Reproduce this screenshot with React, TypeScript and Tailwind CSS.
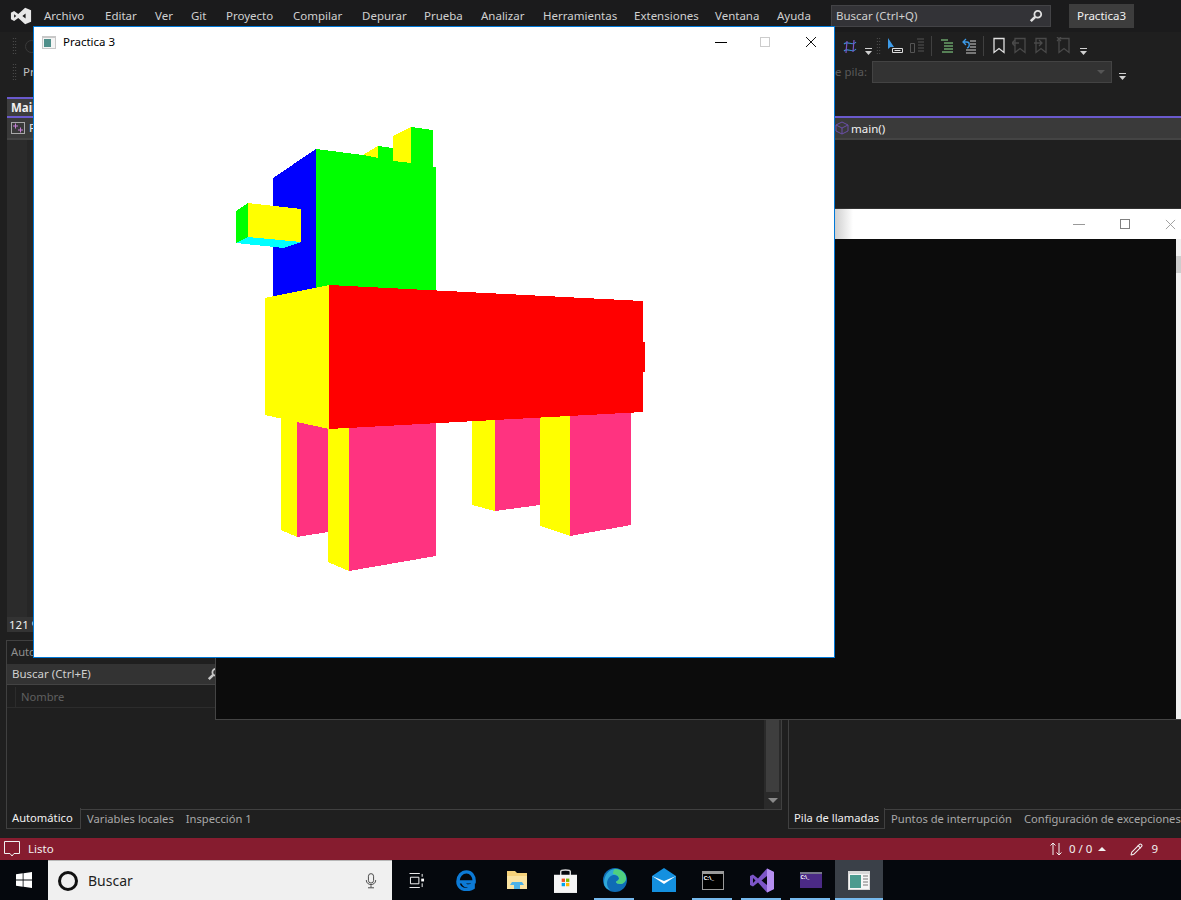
import { ReactNode } from "react";
import { Pencil } from "lucide-react";

const menuItems = [
  { label: "Archivo", w: "w-[61px]" },
  { label: "Editar", w: "w-[50px]" },
  { label: "Ver", w: "w-[36px]" },
  { label: "Git", w: "w-[35px]" },
  { label: "Proyecto", w: "w-[67px]" },
  { label: "Compilar", w: "w-[69px]" },
  { label: "Depurar", w: "w-[62px]" },
  { label: "Prueba", w: "w-[57px]" },
  { label: "Analizar", w: "w-[62px]" },
  { label: "Herramientas", w: "w-[91px]" },
  { label: "Extensiones", w: "w-[81px]" },
  { label: "Ventana", w: "w-[62px]" },
  { label: "Ayuda", w: "w-[54px]" },
];

const Search = ({ className = "" }: { className?: string }) => (
  <svg viewBox="0 0 14 14" className={`w-[14px] h-[14px] ${className}`} fill="none" stroke="currentColor">
    <circle cx="8.8" cy="5.2" r="3.4" strokeWidth="1.8" />
    <path d="M6.2 7.8 1.8 12.2" strokeWidth="2.6" />
  </svg>
);

const VsLogo = ({ className = "", fill = "#e8e8e8" }: { className?: string; fill?: string }) => (
  <svg viewBox="0 0 24 24" preserveAspectRatio="none" className={className}>
    <path fillRule="evenodd" fill={fill} d="M16.500 2 23 5v14l-6.500 3L9 14.500 4.500 18 1 16V8l3.500-2L9 9.500ZM17 9 13.500 12l3.500 3ZM4.500 10v4L6.800 12Z" />
  </svg>
);

const Dropdown = ({ className = "" }: { className?: string }) => (
  <svg viewBox="0 0 7 7" className={`w-[7px] h-[7px] ${className}`}>
    <path d="M0 0h7v1H0zM0 3h7L3.500 7z" fill="#d0d0d0" />
  </svg>
);

const Grip = ({ className = "" }: { className?: string }) => (
  <div className={`w-[5px] h-[18px] bg-[radial-gradient(#5a5a5a_0.7px,transparent_0.8px)] bg-[length:2.500px_3px] ${className}`} />
);

const Bookmark = ({ color, children }: { color: string; children?: ReactNode }) => (
  <svg viewBox="0 0 16 18" className="w-[16px] h-[18px]" fill="none" stroke={color} strokeWidth="1.300">
    <path d="M3 1.500h10v14l-5-4-5 4z" />
    {children}
  </svg>
);

const TabLabel = ({ active, width = "", children }: { active?: boolean; width?: string; children: ReactNode }) => (
  <div className={active ? `h-[21px] shrink-0 pl-[5px] ${width} border border-t-0 border-[#404040] -mt-px bg-[#1f1f1f] text-[#f1f1f1] flex items-center` : "h-[21px] shrink-0 px-[6px] text-[#a8a8a8] flex items-center"}>
    {children}
  </div>
);

const Llama = () => (
  <svg viewBox="34 57 800 600" className="w-[800px] h-[600px] block" shapeRendering="crispEdges">
    <polygon fill="#0000ff" points="273,178 316,149 316,290 273,298" />
    <polygon fill="#ffff00" points="363,155 378,146 378,160" />
    <polygon fill="#00ff00" points="316,149 363,155 378,158 378,146 393,148 393,161 411,163 411,127 433,130 433,167 436,167 436,292 316,292" />
    <polygon fill="#ffff00" points="393,136 411,127 411,163 393,161" />
    <polygon fill="#00ff00" points="236,211 248,203 248,237 236,243" />
    <polygon fill="#ffff00" points="248,203 301,209 301,242 248,237" />
    <polygon fill="#00ffff" points="236,243 248,237 301,242 284,248" />
    <polygon fill="#ffff00" points="281,415 297,415 297,537 281,530" />
    <polygon fill="#ff3380" points="297,415 328,420 328,532 297,537" />
    <polygon fill="#ffff00" points="328,420 349,420 349,571 328,562" />
    <polygon fill="#ff3380" points="349,420 436,420 436,556 349,571" />
    <polygon fill="#ffff00" points="472,410 495,410 495,511 472,505" />
    <polygon fill="#ff3380" points="495,410 540,410 540,505 495,511" />
    <polygon fill="#ffff00" points="540,410 570,410 570,536 540,526" />
    <polygon fill="#ff3380" points="570,410 631,410 631,525 570,536" />
    <polygon fill="#ffff00" points="265,298 329,285 329,429 265,415" />
    <polygon fill="#ff0000" points="329,285 643,301 643,342 645,342 645,372 643,372 643,412 329,429" />
  </svg>
);

const GlWindow = () => (
  <div className="absolute left-[33px] top-[26px] w-[802px] h-[632px] bg-white border border-[#0078d7] text-black">
    <div className="h-[30px] flex items-center relative">
      <svg viewBox="0 0 14 13" className="w-[14px] h-[13px] ml-[8px]">
        <rect width="14" height="13" fill="#c8c8c8" />
        <rect x="1" y="2" width="12" height="10" fill="#f4f4f4" />
        <rect x="2" y="3" width="7" height="8" fill="#4f8f8a" />
      </svg>
      <span className="ml-[7px] text-[11.500px]">Practica 3</span>
      <div className="ml-auto flex items-center h-full">
        <div className="w-[12px] h-px bg-black mr-[33px]" />
        <div className="w-[10px] h-[10px] border border-[#cccccc] mr-[35px]" />
        <svg viewBox="0 0 12 12" className="w-[12px] h-[12px] mr-[17px]" stroke="#111" fill="none">
          <path d="M1 1l10 10M11 1 1 11" />
        </svg>
      </div>
    </div>
    <Llama />
  </div>
);

const ConsoleWindow = () => (
  <div className="absolute left-[215px] top-[208px] w-[966px] h-[512px] border-l border-b border-[#444444] bg-[#0c0c0c]">
    <div className="h-[31px] bg-white flex items-center justify-end border-t border-[#333333] relative">
      <div className="absolute left-[619px] top-0 bottom-0 w-[18px] bg-linear-to-r from-[#cfcfcf] to-white" />
      <div className="w-[12px] h-px bg-[#999999] mr-[35px]" />
      <div className="w-[10px] h-[10px] border border-[#808080] mr-[35px]" />
      <svg viewBox="0 0 12 12" className="w-[11px] h-[11px] mr-[5px]" stroke="#999" fill="none">
        <path d="M1 1l10 10M11 1 1 11" />
      </svg>
    </div>
    <div className="absolute right-0 top-[31px] bottom-0 w-[5px] bg-[#f0f0f0]">
      <div className="w-full h-[17px] mt-[17px] bg-[#cdcdcd]" />
    </div>
  </div>
);

const TaskbarIcons = () => (
  <div className="flex items-center h-full">
    <div className="w-[48px] h-full flex items-center justify-center">
      <svg viewBox="0 0 16 16" className="w-[16px] h-[16px]" fill="#fff">
        <path d="M0 2.300 6.700 1.300V7.600H0ZM7.500 1.200 16 0V7.600H7.500ZM0 8.400H6.700V14.700L0 13.700ZM7.500 8.400H16V16L7.500 14.800Z" />
      </svg>
    </div>
    <div className="w-[344px] h-full bg-[#f0f0f0] border-t border-[#b8b8b8] flex items-center text-[#1e1e1e]">
      <div className="w-[20px] h-[20px] ml-[10px] rounded-full border-[3px] border-[#111111]" />
      <span className="ml-[10px] text-[14px]">Buscar</span>
      <svg viewBox="0 0 14 18" className="w-[12px] h-[17px] ml-auto mr-[15px]" fill="none" stroke="#333">
        <rect x="4" y="1" width="6" height="11" rx="3" />
        <path d="M1.500 8.500c0 7 11 7 11 0M7 14.500v2.500M3.500 17.500h7" />
      </svg>
    </div>
    <div className="w-[49px] h-full flex items-center justify-center">
      <svg viewBox="0 0 16 16" className="w-[16px] h-[15px]" fill="none" stroke="#fff">
        <path d="M0 .5h11M0 15.500h11M1 4.500h9v7H1z" />
        <path d="M13.500 1v3M13.500 11v4" />
        <rect x="12.500" y="6" width="3" height="3" fill="#fff" stroke="none" />
      </svg>
    </div>
    <div className="w-[51px] h-full flex items-center justify-center">
      <svg viewBox="0 0 22 22" className="w-[21px] h-[21px]" fill="none">
        <path d="M3 12.500H19C19.500 6 15.500 2 11 2 6 2 2 6.500 2 12c0 5.500 4 8.500 9 8.500 2.500 0 5-.5 7-2v-3.500c-3.500 2.500-10 3-11-3" stroke="#0c7ad6" strokeWidth="3.500" />
      </svg>
    </div>
    <div className="w-[49px] h-full flex items-center justify-center">
      <svg viewBox="0 0 22 20" className="w-[22px] h-[20px]">
        <path d="M1 1h8l2 2h10v16H1z" fill="#f6d27a" />
        <path d="M1 6h20v13H1z" fill="#fbe3a1" />
        <path d="M6 12h10l2 3h-4v4H8v-4H4z" fill="#4db2e8" />
      </svg>
    </div>
    <div className="w-[49px] h-full flex items-center justify-center">
      <svg viewBox="0 0 24 26" className="w-[23px] h-[25px]">
        <path d="M7 8V3.500C7 1.500 17 1.500 17 3.500V8" fill="none" stroke="#d8d8d8" strokeWidth="1.500" />
        <path d="M0 7h24v19H0z" fill="#f5f5f5" />
        <path d="M8 11h3.500v3.500H8z" fill="#f25022" />
        <path d="M12.500 11H16v3.500h-3.500z" fill="#7fba00" />
        <path d="M8 15.500h3.500V19H8z" fill="#00a4ef" />
        <path d="M12.500 15.500H16V19h-3.500z" fill="#ffb900" />
      </svg>
    </div>
    <div className="w-[49px] h-full flex items-center justify-center relative">
      <svg viewBox="0 0 24 24" className="w-[24px] h-[24px]" fill="none">
        <circle cx="12" cy="12" r="12" fill="#0f6cb5" />
        <path d="M1 15C1 6 7 1 12 1c6 0 11 4 11 9 0 4-3 6-6 6-2 0-4-1-4-2 0-1 3-1 3-4-2-5-11-4-12 5 0 3 1 5 3 7C3 21 1 18 1 15Z" fill="#2fa8d8" />
        <path d="M12 1c6 0 11 4 11 9 0 4-3 6-6 6-2 0-4-1-4-2 0-1 3-1 3-4-1-3-4-4-6-4 0-2 1-5 2-5Z" fill="#4fd07f" />
      </svg>
      <div className="absolute bottom-0 left-[4px] right-[5px] h-[2px] bg-[#76b9ed]" />
    </div>
    <div className="w-[49px] h-full flex items-center justify-center">
      <svg viewBox="0 0 24 24" className="w-[24px] h-[24px]">
        <path d="M0 8 12 0l12 8v16H0z" fill="#1490df" />
        <path d="M0 8l12 8 12-8-12 5z" fill="#fff" />
      </svg>
    </div>
    <div className="w-[49px] h-full flex items-center justify-center relative">
      <div className="w-[22px] h-[19px] border border-[#9a9a9a] bg-black border-t-[3px] flex items-start">
        <span className="text-[6px] leading-[8px] text-white font-bold pl-px">C:\_</span>
      </div>
      <div className="absolute bottom-0 left-[4px] right-[5px] h-[2px] bg-[#76b9ed]" />
    </div>
    <div className="w-[49px] h-full flex items-center justify-center relative">
      <svg viewBox="0 0 24 24" className="w-[24px] h-[25px]">
        <path d="M17 0 24 3.500v17L17 24 8 14l-5 4-3-1.500V7.500L3 6l5 4Z" fill="#7d55c7" />
        <path d="M17 0 24 3.500v17L17 24Z" fill="#b68ff0" />
        <path d="M17 7.500 11.500 12l5.500 4.500Z" fill="#05080d" />
        <path d="M3 9.500v5L5.500 12Z" fill="#05080d" />
      </svg>
      <div className="absolute bottom-0 left-[4px] right-[5px] h-[2px] bg-[#76b9ed]" />
    </div>
    <div className="w-[49px] h-full flex items-center justify-center relative">
      <div className="w-[22px] h-[16px] bg-[#4b2a86] border-t-[2px] border-[#77778a] flex items-start">
        <span className="text-[5px] leading-[7px] text-white font-bold pl-px">C:\_</span>
      </div>
      <div className="absolute bottom-0 left-[4px] right-[5px] h-[2px] bg-[#76b9ed]" />
    </div>
    <div className="w-[48px] h-full bg-[#3a4048] flex items-center justify-center relative">
      <svg viewBox="0 0 22 19" className="w-[22px] h-[19px]">
        <rect width="22" height="19" fill="#d8d8d8" />
        <rect x="1" y="3" width="20" height="15" fill="#f6f6f6" />
        <rect x="2" y="4" width="11" height="13" fill="#4b9b8f" />
        <path d="M15 5h5M15 8h5M15 11h5M15 14h5" stroke="#777" />
      </svg>
      <div className="absolute bottom-0 left-0 right-0 h-[2px] bg-[#76b9ed]" />
    </div>
  </div>
);

const App = () => {
  return (
    <div className="relative w-[1181px] h-[900px] overflow-hidden flex flex-col bg-[#1f1f1f] text-[11.500px] text-[#d0d0d0] font-['Noto_Sans','Open_Sans',sans-serif]">
      {/* menu */}
      <header className="h-[32px] shrink-0 flex items-center bg-[#1b1b1c]">
        <VsLogo className="w-[22px] h-[20px] ml-[10px] mr-[12px]" />
        <nav className="flex items-center w-[787px]">
          {menuItems.map((m) => (
            <span key={m.label} className={`${m.w} shrink-0`}>{m.label}</span>
          ))}
        </nav>
        <div className="w-[220px] h-[22px] bg-[#333337] border border-[#434346] flex items-center px-[4px]">
          <span>Buscar (Ctrl+Q)</span>
          <Search className="ml-auto mr-[3px] text-[#e0e0e0]" />
        </div>
        <div className="ml-[18px] w-[65px] h-[24px] bg-[#3d3d3d] flex items-center justify-center text-[#f1f1f1]">Practica3</div>
      </header>
      {/* toolbars */}
      <div className="h-[28px] shrink-0 flex items-center">
        <Grip className="ml-[12px]" />
        <div className="w-[13px] h-[13px] ml-[8px] rounded-full border border-[#3a3a3a]" />
        <div className="ml-[805px] flex items-center">
          <svg viewBox="0 0 14 15" className="w-[14px] h-[15px]" fill="none" strokeWidth="1.200">
            <path d="M1 5C5 1 9 8 13 3M1 12c4-4 8 3 12-2" stroke="#3b8ed8" />
            <path d="M4 2 3 14M11 1l-1 12" stroke="#7a55c8" />
          </svg>
          <Dropdown className="ml-[8px] mt-[10px]" />
          <Grip className="ml-[4px]" />
          <svg viewBox="0 0 15 17" className="w-[15px] h-[17px] ml-[7px]" fill="none">
            <path d="M0 0v11l2.500-2H6z" fill="#3d9be9" />
            <path d="M4.500 10.500h10v4h-10zM6.500 12.500h6" stroke="#dddddd" />
          </svg>
          <svg viewBox="0 0 14 16" className="w-[14px] h-[16px] ml-[7px]" fill="none" stroke="#555">
            <path d="M.5 5.500h4v9h-4zM7 1h7M8 4h6M8 7h6M8 10h6M8 13h6" />
          </svg>
          <div className="w-px h-[20px] bg-[#404040] ml-[7px]" />
          <svg viewBox="0 0 12 14" className="w-[12px] h-[14px] ml-[9px]" fill="none">
            <path d="M0 1h7M3 4h9M3 7h9M3 10h9M1 13h11" stroke="#8fe38f" />
          </svg>
          <svg viewBox="0 0 16 16" className="w-[16px] h-[16px] ml-[8px]" fill="none">
            <path d="M5 1 2 4l3 3M2 4h4c3 0 3 5 0 6" stroke="#3d9be9" strokeWidth="1.300" />
            <path d="M9 3h6M9 6h6M9 9h6M5 12h10M5 15h10" stroke="#d0d0d0" />
          </svg>
          <div className="w-px h-[20px] bg-[#404040] ml-[6px]" />
          <div className="ml-[7px] flex items-center">
            <Bookmark color="#e0e0e0" />
            <div className="ml-[5px]">
              <Bookmark color="#4a4a4a">
                <path d="M0 6h7M3 3 0 6l3 3" />
              </Bookmark>
            </div>
            <div className="ml-[5px]">
              <Bookmark color="#4a4a4a">
                <path d="M1 6h8M6 3l3 3-3 3" />
              </Bookmark>
            </div>
            <div className="ml-[7px]">
              <Bookmark color="#4a4a4a">
                <path d="M1 0l4 4M5 0 1 4" />
              </Bookmark>
            </div>
          </div>
          <Dropdown className="ml-[8px] mt-[10px]" />
        </div>
      </div>
      <div className="h-[24px] shrink-0 flex items-center">
        <Grip className="ml-[12px]" />
        <span className="ml-[6px] w-[14px] text-[#c0c0c0]">Pr</span>
        <span className="ml-[798px] w-[37px] text-[#5a5a5a] whitespace-nowrap">e pila:</span>
        <div className="w-[240px] h-[22px] bg-[#333333] border border-[#434343] flex items-center justify-end pr-[6px]">
          <div className="w-0 h-0 border-x-[4px] border-x-transparent border-t-[4px] border-t-[#555555]" />
        </div>
        <Dropdown className="ml-[7px] mt-[8px]" />
      </div>
      <div className="h-[13px] shrink-0" />
      {/* editor */}
      <section className="h-[535px] shrink-0 ml-[7px] flex flex-col">
        <div className="h-[19px] shrink-0 flex">
          <div className="w-[60px] h-full border-t-2 border-[#6a5acd] bg-[#3d3d3d] pl-[4px] font-bold text-[#f1f1f1] leading-[17px]">Main</div>
        </div>
        <div className="h-[2px] shrink-0 bg-[#6a5acd]" />
        <div className="h-[22px] shrink-0 bg-[#3a3a3a] border-b-2 border-[#444444] flex items-center">
          <svg viewBox="0 0 14 12" className="w-[14px] h-[12px] ml-[4px]" fill="none">
            <rect x=".5" y=".5" width="13" height="11" stroke="#a8a8a8" />
            <path d="M2 4h5M4.500 1.500v5M7 8h5M9.500 5.500v5" stroke="#c67fd8" />
          </svg>
          <span className="ml-[4px] w-[8px] text-[#e8e8e8]">P</span>
          <svg viewBox="0 0 14 14" className="w-[14px] h-[14px] ml-[798px]" fill="none" stroke="#6a4fa8">
            <path d="M7 1 13 4v6l-6 3-6-3V4zM1 4l6 3 6-3M7 7v6" />
          </svg>
          <span className="ml-[2px] pt-px text-[#f1f1f1]">main()</span>
        </div>
        <div className="flex-1 flex min-h-0">
          <div className="w-[20px] bg-[#2b2b2b]" />
          <div className="w-[6px] bg-[#262626]" />
          <div className="flex-1 bg-[#1f1f1f]" />
        </div>
        <div className="h-[15px] shrink-0 bg-[#333333] pl-[2px] leading-[15px] text-[#f1f1f1] flex items-center">121 %</div>
      </section>
      <div className="h-[8px] shrink-0" />
      {/* bottom panels */}
      <section className="h-[192px] shrink-0 flex text-[11.200px]">
        <div className="w-[776px] ml-[6px] flex flex-col">
          <div className="h-[170px] border border-[#404040] flex flex-col">
            <div className="h-[23px] shrink-0 pl-[4px] text-[#8f8f8f] flex items-center">Automático</div>
            <div className="h-[21px] shrink-0 bg-[#333333] border-b border-[#434343] pl-[5px] pr-[560px] flex items-center text-[11.500px]">
              <span>Buscar (Ctrl+E)</span>
              <Search className="ml-auto text-[#c8c8c8]" />
            </div>
            <div className="h-[21px] mt-[2px] shrink-0 border-b border-[#2c2c2c] pl-[8px] text-[#5f5f5f] flex items-center">
              <span className="h-full border-l border-[#2c2c2c] pl-[5px] flex items-center">Nombre</span>
            </div>
            <div className="flex-1 flex justify-end">
              <div className="w-[17px] bg-[#2a2a2a] flex flex-col items-center justify-end">
                <div className="flex-1 w-[13px] bg-[#3e3e3e] mb-[6px]" />
                <div className="w-0 h-0 mb-[6px] border-x-[5px] border-x-transparent border-t-[5px] border-t-[#8a8a8a]" />
              </div>
            </div>
          </div>
          <div className="flex -mt-px">
            <TabLabel active width="w-[75px]">Automático</TabLabel>
            <TabLabel>Variables locales</TabLabel>
            <TabLabel>Inspección 1</TabLabel>
          </div>
        </div>
        <div className="flex-1 ml-[6px] flex flex-col min-w-0">
          <div className="h-[170px] border-l border-b border-[#404040]" />
          <div className="flex -mt-px whitespace-nowrap">
            <TabLabel active width="w-[97px]">Pila de llamadas</TabLabel>
            <TabLabel>Puntos de interrupción</TabLabel>
            <TabLabel>Configuración de excepciones</TabLabel>
          </div>
        </div>
      </section>
      <div className="h-[6px] shrink-0" />
      {/* status */}
      <footer className="h-[22px] shrink-0 bg-[#861c2f] flex items-center text-[#f1f1f1]">
        <svg viewBox="0 0 17 16" className="w-[17px] h-[16px] ml-[4px]" fill="none" stroke="#f1f1f1">
          <path d="M.5 .5h15v12H10l-2 2.500-2-2.500H.5z" />
        </svg>
        <span className="ml-[7px]">Listo</span>
        <div className="ml-auto flex items-center mr-[23px]">
          <svg viewBox="0 0 14 14" className="w-[14px] h-[14px]" fill="none" stroke="#f1f1f1">
            <path d="M4 13V1M1.500 3.500 4 1l2.500 2.500M10 1v12M7.500 10.500 10 13l2.500-2.500" />
          </svg>
          <span className="ml-[6px]">0 / 0</span>
          <div className="ml-[6px] w-0 h-0 border-x-[4px] border-x-transparent border-b-[4px] border-b-[#f1f1f1]" />
          <Pencil size={13} className="ml-[24px]" />
          <span className="ml-[8px]">9</span>
        </div>
      </footer>
      {/* taskbar */}
      <div className="h-[40px] shrink-0 bg-[#05080d]">
        <TaskbarIcons />
      </div>
      <ConsoleWindow />
      <GlWindow />
    </div>
  );
};

export default App;
